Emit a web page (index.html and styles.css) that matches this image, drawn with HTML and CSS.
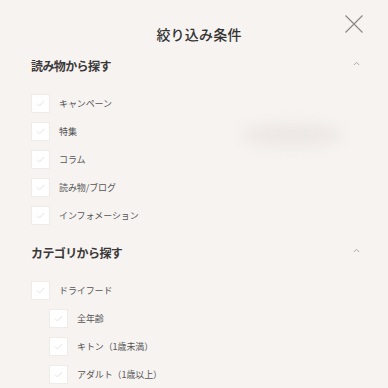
FILE: index.html
```html
<!DOCTYPE html>
<html lang="ja">
<head>
<meta charset="utf-8">
<link rel="stylesheet" href="styles.css">
</head>
<body>
<div class="panel">
  <header class="header">
    <h1 class="title">絞り込み条件</h1>
    <button class="close" aria-label="閉じる">
      <svg width="18" height="18" viewBox="0 0 18 18"><path d="M0.5 0.5L17.5 17.5M17.5 0.5L0.5 17.5" stroke="#8a8684" stroke-width="1.1" fill="none"/></svg>
    </button>
  </header>

  <section class="section">
    <div class="section-head">
      <span class="section-title">読み物から探す</span>
      <svg class="chev" width="7" height="5" viewBox="0 0 7 5"><path d="M0.8 4L3.5 1.3L6.2 4" stroke="#aaa5a2" stroke-width="1" fill="none"/></svg>
    </div>
    <ul class="list">
      <li class="row"><span class="box"><svg width="9" height="7" viewBox="0 0 9 7"><path d="M1 3.5L3.5 6L8 1" stroke="#e8e4e2" stroke-width="1" fill="none"/></svg></span><span class="label">キャンペーン</span></li>
      <li class="row"><span class="box"><svg width="9" height="7" viewBox="0 0 9 7"><path d="M1 3.5L3.5 6L8 1" stroke="#e8e4e2" stroke-width="1" fill="none"/></svg></span><span class="label">特集</span></li>
      <li class="row"><span class="box"><svg width="9" height="7" viewBox="0 0 9 7"><path d="M1 3.5L3.5 6L8 1" stroke="#e8e4e2" stroke-width="1" fill="none"/></svg></span><span class="label">コラム</span></li>
      <li class="row"><span class="box"><svg width="9" height="7" viewBox="0 0 9 7"><path d="M1 3.5L3.5 6L8 1" stroke="#e8e4e2" stroke-width="1" fill="none"/></svg></span><span class="label">読み物/ブログ</span></li>
      <li class="row"><span class="box"><svg width="9" height="7" viewBox="0 0 9 7"><path d="M1 3.5L3.5 6L8 1" stroke="#e8e4e2" stroke-width="1" fill="none"/></svg></span><span class="label">インフォメーション</span></li>
    </ul>
  </section>

  <section class="section">
    <div class="section-head">
      <span class="section-title">カテゴリから探す</span>
      <svg class="chev" width="7" height="5" viewBox="0 0 7 5"><path d="M0.8 4L3.5 1.3L6.2 4" stroke="#aaa5a2" stroke-width="1" fill="none"/></svg>
    </div>
    <ul class="list">
      <li class="row"><span class="box"><svg width="9" height="7" viewBox="0 0 9 7"><path d="M1 3.5L3.5 6L8 1" stroke="#e8e4e2" stroke-width="1" fill="none"/></svg></span><span class="label">ドライフード</span></li>
      <li class="row sub"><span class="box"><svg width="9" height="7" viewBox="0 0 9 7"><path d="M1 3.5L3.5 6L8 1" stroke="#e8e4e2" stroke-width="1" fill="none"/></svg></span><span class="label">全年齢</span></li>
      <li class="row sub"><span class="box"><svg width="9" height="7" viewBox="0 0 9 7"><path d="M1 3.5L3.5 6L8 1" stroke="#e8e4e2" stroke-width="1" fill="none"/></svg></span><span class="label">キトン（1歳未満）</span></li>
      <li class="row sub"><span class="box"><svg width="9" height="7" viewBox="0 0 9 7"><path d="M1 3.5L3.5 6L8 1" stroke="#e8e4e2" stroke-width="1" fill="none"/></svg></span><span class="label">アダルト（1歳以上）</span></li>
    </ul>
  </section>
  <div class="ghost"></div>
</div>
</body>
</html>
```

FILE: styles.css
```css
* { box-sizing: border-box; }
html, body {
  margin: 0;
  padding: 0;
  background: #f7f3f1;
  overflow: hidden;
}
body {
  font-family: "Noto Sans CJK JP", "Noto Sans", sans-serif;
  color: #333;
}
.panel {
  position: relative;
  height: 388px;
  padding: 0 28px 0 31px;
}
.header {
  position: relative;
  height: 50px;
  padding-top: 24px;
}
.title {
  margin: 0;
  text-align: center;
  font-size: 14px;
  line-height: 20px;
  font-weight: 500;
  letter-spacing: 0.2px;
  color: #333;
  padding-left: 7px;
}
.close {
  position: absolute;
  top: 15px;
  right: -3px;
  width: 18px;
  height: 18px;
  padding: 0;
  border: 0;
  background: none;
  display: block;
}
.close svg { display: block; }
.section-head {
  height: 30px;
  display: flex;
  align-items: center;
  justify-content: space-between;
}
.section-title {
  font-size: 12px;
  font-weight: 700;
  color: #3a3838;
  letter-spacing: -0.6px;
}
.chev { margin-top: -3px; }
.list {
  list-style: none;
  margin: 9px 0 8px;
  padding: 0;
}
.row {
  height: 28px;
  display: flex;
  align-items: center;
  gap: 9px;
}
.row.sub { padding-left: 18px; }
.box {
  width: 19px;
  height: 19px;
  background: #fff;
  border: 1px solid #efebe9;
  display: flex;
  align-items: center;
  justify-content: center;
}
.box svg { display: block; }
.label {
  font-size: 9px;
  color: #555;
  letter-spacing: -0.1px;
}
.ghost {
  position: absolute;
  left: 242px;
  top: 124px;
  width: 100px;
  height: 22px;
  border-radius: 50%;
  background: #ece7e4;
  filter: blur(7px);
}
```
